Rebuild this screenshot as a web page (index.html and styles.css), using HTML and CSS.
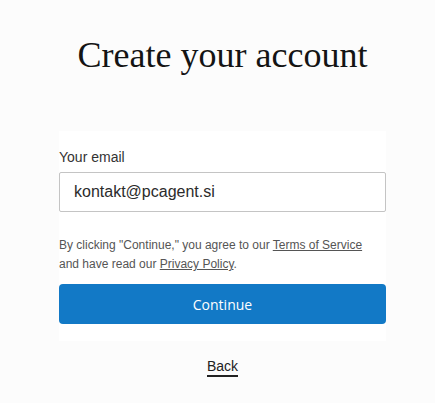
FILE: index.html
```html
<!DOCTYPE html>
<html lang="en">
<head>
<meta charset="utf-8">
<title>Create your account</title>
<link rel="stylesheet" href="styles.css">
</head>
<body>
<main class="page">
  <h1 class="title">Create your account</h1>
  <form class="card">
    <label class="label" for="email">Your email</label>
    <input class="input" id="email" type="email" value="kontakt@pcagent.si">
    <p class="legal">By clicking "Continue," you agree to our <a href="#">Terms of Service</a> and have read our <a href="#">Privacy Policy</a>.</p>
    <button class="btn" type="button">Continue</button>
  </form>
  <a class="back" href="#">Back</a>
</main>
</body>
</html>
```
FILE: styles.css
```css
html, body {
  margin: 0;
  padding: 0;
  background: #fcfcfc;
}
body {
  padding-left: 10px;
  font-family: "Liberation Sans", Arial, sans-serif;
}
.page {
  width: 327px;
  margin: 0 auto;
  display: flex;
  flex-direction: column;
  align-items: center;
}
.title {
  margin: 32px 0 0;
  height: 99px;
  font-family: "Liberation Serif", "Times New Roman", serif;
  font-weight: 400;
  font-size: 36px;
  line-height: 46px;
  color: #141414;
  white-space: nowrap;
}
.card {
  width: 327px;
  background: #ffffff;
  display: flex;
  flex-direction: column;
  padding: 18px 0 17px;
  box-sizing: border-box;
}
.label {
  font-size: 14px;
  line-height: 16px;
  color: #333;
  margin-bottom: 7px;
}
.input {
  box-sizing: border-box;
  width: 100%;
  height: 40px;
  border: 1px solid #c4c4c4;
  border-radius: 2px;
  padding: 0 14px;
  font-family: "Liberation Sans", Arial, sans-serif;
  font-size: 16px;
  color: #2b2b2b;
  background: #fff;
  outline: none;
}
.legal {
  margin: 24px 0 0;
  padding-right: 16px;
  font-size: 12px;
  line-height: 19px;
  color: #555;
}
.legal a {
  color: #555;
  text-decoration: underline;
}
.btn {
  margin-top: 10px;
  height: 40px;
  width: 100%;
  border: none;
  border-radius: 4px;
  background: #1279c6;
  color: #fff;
  font-family: "Open Sans", "Liberation Sans", sans-serif;
  font-size: 14px;
}
.back {
  margin-top: 16px;
  font-size: 14px;
  line-height: 18px;
  color: #222;
  text-decoration: none;
  border-bottom: 2px solid #222;
}
```
